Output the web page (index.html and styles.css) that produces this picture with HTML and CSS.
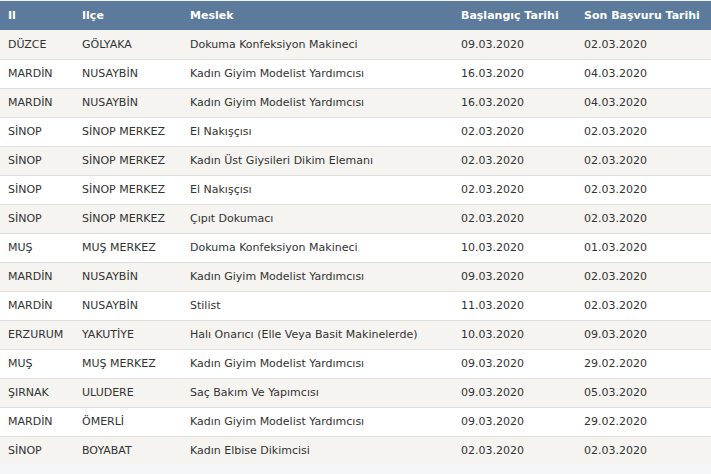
FILE: index.html
```html
<!DOCTYPE html>
<html lang="tr">
<head>
<meta charset="utf-8">
<title>Kurslar</title>
<link rel="stylesheet" href="styles.css">
</head>
<body>
<div class="page">
<table class="grid">
<colgroup>
<col class="c-il"><col class="c-ilce"><col class="c-meslek"><col class="c-bas"><col class="c-son">
</colgroup>
<thead>
<tr><th>Il</th><th>Ilçe</th><th>Meslek</th><th>Başlangıç Tarihi</th><th>Son Başvuru Tarihi</th></tr>
</thead>
<tbody>
<tr><td>DÜZCE</td><td>GÖLYAKA</td><td>Dokuma Konfeksiyon Makineci</td><td>09.03.2020</td><td>02.03.2020</td></tr>
<tr><td>MARDİN</td><td>NUSAYBİN</td><td>Kadın Giyim Modelist Yardımcısı</td><td>16.03.2020</td><td>04.03.2020</td></tr>
<tr><td>MARDİN</td><td>NUSAYBİN</td><td>Kadın Giyim Modelist Yardımcısı</td><td>16.03.2020</td><td>04.03.2020</td></tr>
<tr><td>SİNOP</td><td>SİNOP MERKEZ</td><td>El Nakışçısı</td><td>02.03.2020</td><td>02.03.2020</td></tr>
<tr><td>SİNOP</td><td>SİNOP MERKEZ</td><td>Kadın Üst Giysileri Dikim Elemanı</td><td>02.03.2020</td><td>02.03.2020</td></tr>
<tr><td>SİNOP</td><td>SİNOP MERKEZ</td><td>El Nakışçısı</td><td>02.03.2020</td><td>02.03.2020</td></tr>
<tr><td>SİNOP</td><td>SİNOP MERKEZ</td><td>Çıpıt Dokumacı</td><td>02.03.2020</td><td>02.03.2020</td></tr>
<tr><td>MUŞ</td><td>MUŞ MERKEZ</td><td>Dokuma Konfeksiyon Makineci</td><td>10.03.2020</td><td>01.03.2020</td></tr>
<tr><td>MARDİN</td><td>NUSAYBİN</td><td>Kadın Giyim Modelist Yardımcısı</td><td>09.03.2020</td><td>02.03.2020</td></tr>
<tr><td>MARDİN</td><td>NUSAYBİN</td><td>Stilist</td><td>11.03.2020</td><td>02.03.2020</td></tr>
<tr><td>ERZURUM</td><td>YAKUTİYE</td><td>Halı Onarıcı (Elle Veya Basit Makinelerde)</td><td>10.03.2020</td><td>09.03.2020</td></tr>
<tr><td>MUŞ</td><td>MUŞ MERKEZ</td><td>Kadın Giyim Modelist Yardımcısı</td><td>09.03.2020</td><td>29.02.2020</td></tr>
<tr><td>ŞIRNAK</td><td>ULUDERE</td><td>Saç Bakım Ve Yapımcısı</td><td>09.03.2020</td><td>05.03.2020</td></tr>
<tr><td>MARDİN</td><td>ÖMERLİ</td><td>Kadın Giyim Modelist Yardımcısı</td><td>09.03.2020</td><td>29.02.2020</td></tr>
<tr><td>SİNOP</td><td>BOYABAT</td><td>Kadın Elbise Dikimcisi</td><td>02.03.2020</td><td>02.03.2020</td></tr>
</tbody>
</table>
</div>
</body>
</html>
```
FILE: styles.css
```css
html, body {
  margin: 0;
  padding: 0;
  background: #f3f5f7;
}
.page {
  padding-top: 1px;
  background: #f3f5f7;
  font-family: "DejaVu Sans", Verdana, sans-serif;
  font-size: 11px;
}
.grid {
  width: 711px;
  border-collapse: collapse;
  table-layout: fixed;
}
.c-il { width: 74px; }
.c-ilce { width: 108px; }
.c-meslek { width: 271px; }
.c-bas { width: 123px; }
.c-son { width: 135px; }
.grid th {
  background: #5b7a9c;
  color: #fff;
  font-weight: bold;
  text-align: left;
  height: 29px;
  padding: 0 0 0 8px;
  white-space: nowrap;
  box-sizing: border-box;
}
.grid td {
  height: 29px;
  box-sizing: border-box;
  padding: 0 0 0 8px;
  color: #333;
  white-space: nowrap;
  border-bottom: 1px solid #dedede;
}
.grid tbody tr:nth-child(odd) td { background: #f5f4f0; }
.grid tbody tr:nth-child(even) td { background: #fff; }
.grid tbody tr:last-child td { border-bottom: none; }
```
